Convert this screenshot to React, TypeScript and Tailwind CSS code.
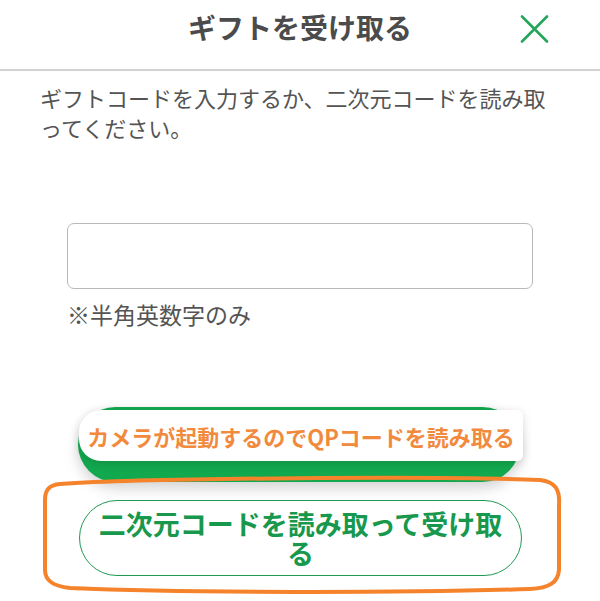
import React from "react";

const jp = { fontFamily: '"Noto Sans CJK JP", "Noto Sans", sans-serif' };

export default function App() {
  return (
    <div className="relative w-[600px] h-[601px] bg-white overflow-hidden" style={jp}>
      {/* Header */}
      <div className="relative h-[71px] border-b-[2px] border-[#d2d2d2] flex justify-center">
        <h1 className="mt-[8px] text-[28px] leading-[38px] font-bold text-[#4b4b4b]">ギフトを受け取る</h1>
        <button className="absolute right-[51px] top-[15px] w-[29px] h-[28px]" aria-label="close">
          <svg width="29" height="28" viewBox="0 0 29 28">
            <path d="M2 1.5 L27 26.5 M27 1.5 L2 26.5" stroke="#25a55a" strokeWidth="2.6" strokeLinecap="round" />
          </svg>
        </button>
      </div>

      {/* Description */}
      <p className="mt-[11px] px-[40px] text-[22px] leading-[30px] text-[#545454]">
        ギフトコードを入力するか、二次元コードを読み取ってください。
      </p>

      {/* Input */}
      <div className="mx-[67px] mt-[81px]">
        <input className="block w-full h-[66px] rounded-[7px] border-[1.5px] border-[#b9b9b9] bg-white outline-none px-3" />
        <p className="mt-[10px] text-[23px] leading-[30px] text-[#545454]">※半角英数字のみ</p>
      </div>

      {/* Green camera button */}
      <div className="relative ml-[78px] mt-[78px] w-[442px] h-[75px] rounded-full bg-[#12a84e] shadow-[0_6px_14px_rgba(0,0,0,0.18)]">
        <div className="absolute left-[1px] right-[-3px] top-[3px] h-[51px] rounded-l-[22px] rounded-r-[6px] bg-white shadow-[0_2px_10px_rgba(0,0,0,0.15)] flex items-center justify-center">
          <span className="text-[22px] font-bold leading-none text-[#f28a3e] whitespace-nowrap">
            カメラが起動するのでQPコードを読み取る
          </span>
        </div>
      </div>

      {/* Outline button */}
      <button className="ml-[79px] mt-[18px] w-[443px] h-[76px] rounded-full border-[1.5px] border-[#1f9a52] bg-white flex items-center justify-center">
        <span className="text-[27px] font-bold leading-[29px] text-[#17984c] text-center">
          二次元コードを読み取って受け取
          <br />る
        </span>
      </button>

      {/* Orange annotation */}
      <svg className="absolute left-0 top-0 pointer-events-none" width="600" height="601" viewBox="0 0 600 601">
        <path
          d="M60 484 C150 478 440 476 540 480 C556 482 560 490 559 505 L559 570 C558 582 550 588 530 589 C400 593 190 593 70 588 C52 586 45 580 45 570 L45 500 C45 489 50 485 60 484 Z"
          fill="none"
          stroke="#f5832b"
          strokeWidth="4"
        />
      </svg>
    </div>
  );
}
